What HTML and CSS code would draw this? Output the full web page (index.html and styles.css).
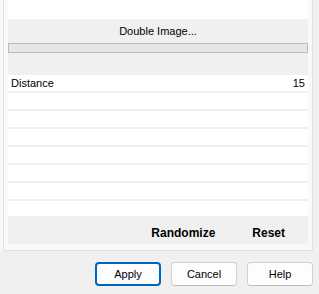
FILE: index.html
```html
<!DOCTYPE html>
<html lang="en">
<head>
  <meta charset="UTF-8">
  <meta name="viewport" content="width=device-width, initial-scale=1.0">
  <title>Double Image</title>
  <link rel="stylesheet" href="styles.css">
</head>
<body>
  <div class="frame">
    <div class="panel">
      <div class="blank-top"></div>

      <div class="section">
        <div class="section-title">Double Image...</div>
        <div class="bar"></div>
      </div>

      <div class="params">
        <div class="row"><span>Distance</span><span>15</span></div>
        <div class="row"></div>
        <div class="row"></div>
        <div class="row"></div>
        <div class="row"></div>
        <div class="row"></div>
        <div class="row"></div>
        <div class="row last"></div>
      </div>

      <div class="actions">
        <span class="action">Randomize</span>
        <span class="action">Reset</span>
      </div>
    </div>
  </div>

  <div class="footer">
    <button class="btn default">Apply</button>
    <button class="btn">Cancel</button>
    <button class="btn">Help</button>
  </div>
</body>
</html>
```

FILE: styles.css
```css
body {
  margin: 0;
  background-color: #f0f0f0;
  font-family: "Liberation Sans", Arial, sans-serif;
  font-size: 11px;
  color: #000;
  height: 294px;
  overflow: hidden;
}

.frame {
  display: flex;
  padding-left: 3px;
  width: 313px;
  box-sizing: border-box;
  background-color: #f8f8f8;
}

.panel {
  width: 310px;
  box-sizing: border-box;
  background-color: #f9f9f9;
  border: 1px solid #e2e2e2;
  border-top: none;
  padding: 0 4px 6px 4px;
}

.blank-top {
  height: 19px;
  background-color: #fff;
}

.section {
  height: 56px;
  box-sizing: border-box;
  background-color: #f0f0f0;
  padding-top: 5px;
}

.section-title {
  text-align: center;
  line-height: 14px;
  height: 14px;
  margin-bottom: 5px;
}

.bar {
  height: 10px;
  box-sizing: border-box;
  background-color: #e6e6e6;
  border: 1px solid #bcbcbc;
}

.params {
  background-color: #fff;
}

.row {
  display: flex;
  justify-content: space-between;
  height: 16px;
  line-height: 16px;
  padding: 0 3px;
  border-bottom: 2px solid #efefef;
}

.row.last {
  height: 15px;
  border-bottom: none;
}

.actions {
  display: flex;
  justify-content: flex-end;
  gap: 37px;
  height: 28px;
  box-sizing: border-box;
  padding: 10px 23px 0 0;
  background-color: #f0f0f0;
}

.action {
  font-size: 12px;
  font-weight: bold;
  line-height: 15px;
}

.footer {
  display: flex;
  justify-content: flex-end;
  gap: 10px;
  padding: 11px 6px 0 0;
}

.btn {
  width: 66px;
  height: 24px;
  box-sizing: border-box;
  background-color: #fdfdfd;
  border: 1px solid #d0d0d0;
  border-bottom-color: #bdbdbd;
  border-radius: 4px;
  font-family: "Liberation Sans", Arial, sans-serif;
  font-size: 11px;
  color: #000;
  padding: 0;
  cursor: pointer;
}

.btn.default {
  border: 2px solid #0067c0;
}
```
